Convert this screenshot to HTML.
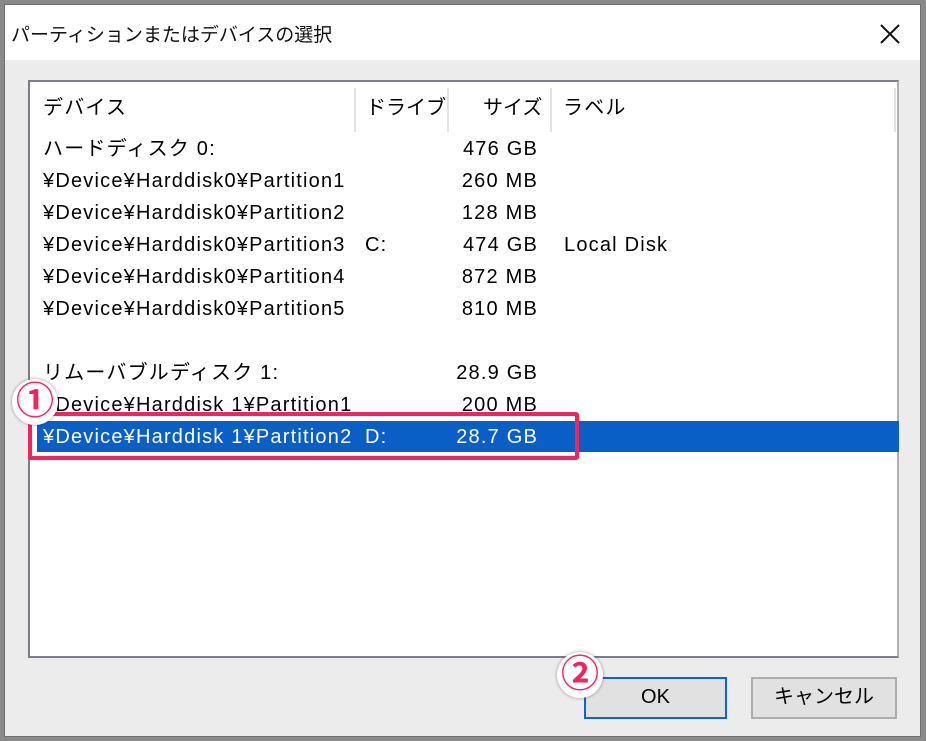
<!DOCTYPE html>
<html><head><meta charset="utf-8"><style>
*{margin:0;padding:0;box-sizing:border-box}
body{width:926px;height:741px;background:#8a8a8a;position:relative;overflow:hidden;font-family:"Liberation Sans","Noto Sans CJK JP",sans-serif;color:#000}
.dlg{position:absolute;left:4px;top:4px;width:917px;height:733px;background:#ececec;border:1px solid #6e6e6e}
.title{position:absolute;left:0;top:0;width:100%;height:55px;background:#fff}
.title span{position:absolute;left:6px;top:15px;font-size:19px;color:#111}
.x{position:absolute;left:874px;top:18px}
.list{position:absolute;left:23px;top:75px;width:871px;height:578px;background:#fff;border:2px solid #7a7d85;border-right-color:#b0b0b0}
.t{position:absolute;font-size:20px;white-space:nowrap;line-height:24px;letter-spacing:1.2px}
.r{text-align:right;width:100px}
.div{position:absolute;top:6px;width:2px;height:44px;background:#e2e2e2}
.sel{position:absolute;left:7px;top:339px;width:862px;height:31px;background:#0a5fc6}
.red{position:absolute;left:-2px;top:330px;width:551px;height:48px;border:4px solid #f0245e;border-radius:3px}
.btn{position:absolute;top:672px;height:42px;background:#e1e1e1;border:2px solid #adadad;font-size:20px;text-align:center;line-height:37px}
.ok{left:579px;width:143px;border-color:#0a64d6}
.cn{left:746px;width:146px}
.circ{position:absolute;width:46px;height:46px;border-radius:50%;background:#fff;box-shadow:0 0 3px rgba(0,0,0,.4);color:#f0245e;font-size:38px;font-weight:bold;text-align:center;line-height:46px}
</style></head><body>
<div class="dlg">
 <div class="title"><span>パーティションまたはデバイスの選択</span>
  <svg class="x" width="22" height="22" viewBox="0 0 22 22"><path d="M2 2L20 20M20 2L2 20" stroke="#111" stroke-width="2"/></svg></div>
 <div class="list">
  <div class="div" style="left:324px"></div><div class="div" style="left:417px"></div><div class="div" style="left:520px"></div><div class="div" style="left:864px"></div>
  <div class="t" style="left:13px;top:14px">デバイス</div>
  <div class="t" style="left:336px;top:14px;letter-spacing:0">ドライブ</div>
  <div class="t" style="left:453px;top:14px;letter-spacing:0">サイズ</div>
  <div class="t" style="left:533px;top:14px">ラベル</div>
  <div class="sel"></div>
  <div class="t" style="left:13px;top:55px">ハードディスク 0:</div><div class="t r" style="left:408px;top:55px">476 GB</div>
  <div class="t" style="left:13px;top:87px">¥Device¥Harddisk0¥Partition1</div><div class="t r" style="left:408px;top:87px">260 MB</div>
  <div class="t" style="left:13px;top:119px">¥Device¥Harddisk0¥Partition2</div><div class="t r" style="left:408px;top:119px">128 MB</div>
  <div class="t" style="left:13px;top:151px">¥Device¥Harddisk0¥Partition3</div><div class="t" style="left:335px;top:151px">C:</div><div class="t r" style="left:408px;top:151px">474 GB</div><div class="t" style="left:534px;top:151px">Local Disk</div>
  <div class="t" style="left:13px;top:183px">¥Device¥Harddisk0¥Partition4</div><div class="t r" style="left:408px;top:183px">872 MB</div>
  <div class="t" style="left:13px;top:215px">¥Device¥Harddisk0¥Partition5</div><div class="t r" style="left:408px;top:215px">810 MB</div>
  <div class="t" style="left:13px;top:279px">リムーバブルディスク 1:</div><div class="t r" style="left:408px;top:279px">28.9 GB</div>
  <div class="t" style="left:13px;top:311px">¥Device¥Harddisk 1¥Partition1</div><div class="t r" style="left:408px;top:311px">200 MB</div>
  <div class="t" style="left:13px;top:343px;color:#fff">¥Device¥Harddisk 1¥Partition2</div><div class="t" style="left:335px;top:343px;color:#fff">D:</div><div class="t r" style="left:408px;top:343px;color:#fff">28.7 GB</div>
  <div class="red"></div>
 </div>
 <div class="btn ok">OK</div>
 <div class="btn cn">キャンセル</div>
</div>
<div class="circ" style="left:12px;top:379px">①</div>
<div class="circ" style="left:557px;top:652px">②</div>
</body></html>
